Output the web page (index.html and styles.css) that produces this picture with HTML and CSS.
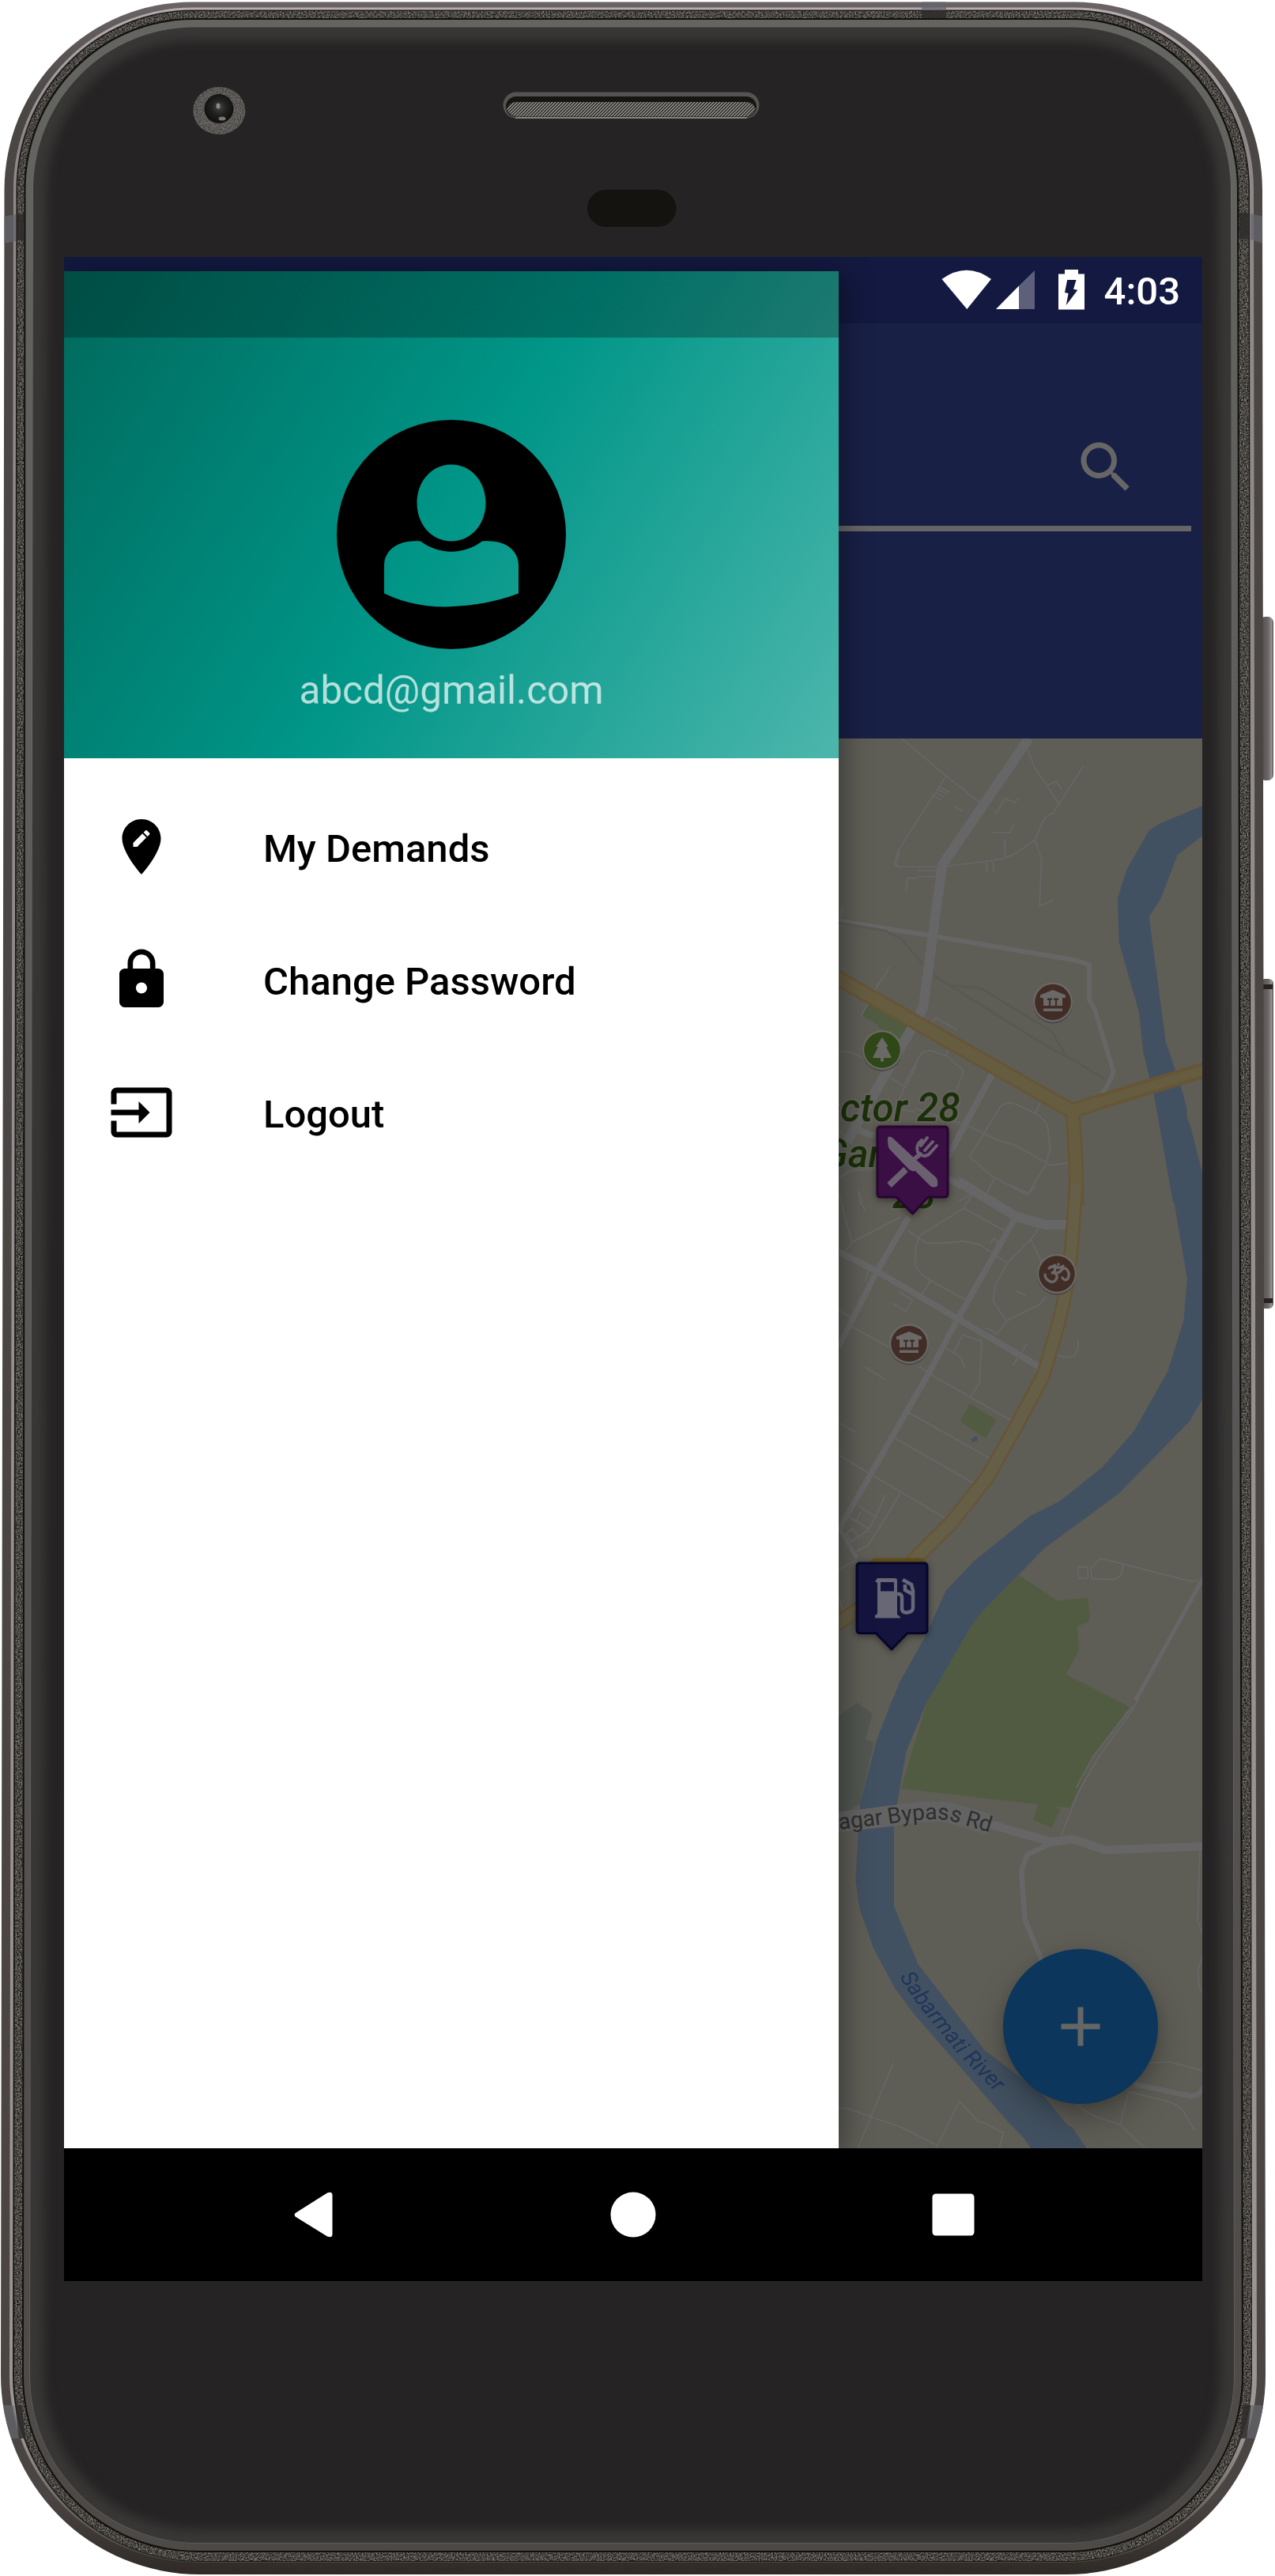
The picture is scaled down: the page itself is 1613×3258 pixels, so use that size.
FILE: index.html
```html
<!DOCTYPE html>
<html lang="en">
<head>
<meta charset="utf-8">
<title>Navigation drawer</title>
<link rel="stylesheet" href="styles.css">
</head>
<body>
<main class="phone">
  <svg class="phone-body" viewBox="0 0 1613 3258" aria-hidden="true">
    <defs>
      <filter id="grain" x="0" y="0" width="100%" height="100%" color-interpolation-filters="sRGB">
        <feTurbulence type="fractalNoise" baseFrequency=".55" numOctaves="2" seed="4" result="n"/>
        <feColorMatrix in="n" type="matrix" values=".8 0 0 0 -.11  .8 0 0 0 -.12  .8 0 0 0 -.14  0 0 0 0 1" result="g"/>
        <feComposite in="g" in2="SourceGraphic" operator="in"/>
      </filter>
      <filter id="soft" x="-5%" y="-5%" width="110%" height="110%" color-interpolation-filters="sRGB"><feGaussianBlur stdDeviation="7"/></filter>
      <linearGradient id="rim" x1="0" y1="0" x2="0" y2="1">
        <stop offset="0" stop-color="#6b6365"/><stop offset=".04" stop-color="#4a4643"/><stop offset=".97" stop-color="#4a4542"/><stop offset="1" stop-color="#2f2a26"/>
      </linearGradient>
      <linearGradient id="shine" x1="0" y1="0" x2="0" y2="1">
        <stop offset="0" stop-color="#b5aeb0"/><stop offset=".05" stop-color="#8f888a"/><stop offset=".95" stop-color="#9b9593"/><stop offset="1" stop-color="#4c4541"/>
      </linearGradient>
      <linearGradient id="lip" x1="0" y1="0" x2="0" y2="1">
        <stop offset="0" stop-color="#646460"/><stop offset=".5" stop-color="#5a5858"/><stop offset="1" stop-color="#4c4946"/>
      </linearGradient>
      <linearGradient id="key" x1="0" y1="0" x2="1" y2="0">
        <stop offset="0" stop-color="#4b4745"/><stop offset=".65" stop-color="#6f6a69"/><stop offset=".85" stop-color="#999395"/><stop offset="1" stop-color="#55504e"/>
      </linearGradient>
      <pattern id="mesh" width="4" height="4" patternUnits="userSpaceOnUse">
        <rect width="4" height="4" fill="#24231f"/><path d="M-1 5L5 -1M-1 1L1 -1M3 5L5 3" stroke="#a09e9a" stroke-width="1.300"/>
      </pattern>
      <radialGradient id="lens" cx=".5" cy=".45" r=".5">
        <stop offset="0" stop-color="#454644"/><stop offset=".5" stop-color="#222321"/><stop offset="1" stop-color="#111110"/>
      </radialGradient>
      <clipPath id="glass"><path d="M42 240A203 206 0 0 1 245 34.500H1355A203 206 0 0 1 1557 240L1561 3004A212 212 0 0 1 1349 3216H250A212 212 0 0 1 38 3004Z"/></clipPath>
      <clipPath id="shell"><path d="M5.500 240A238 238 0 0 1 243.500 2.500H1359A238 238 0 0 1 1597 240L1601 3004A252 252 0 0 1 1349 3256H253A252 252 0 0 1 1 3004Z"/></clipPath>
    </defs>
    <rect x="1594" y="780" width="17" height="207" rx="7" fill="url(#key)"/>
    <rect x="1594" y="1238" width="17" height="417" rx="6" fill="url(#key)"/>
    <path d="M1598 1248h12M1598 1645h12" stroke="#262220" stroke-width="6"/>
    <path fill="url(#rim)" d="M5.500 240A238 238 0 0 1 243.500 2.500H1359A238 238 0 0 1 1597 240L1601 3004A252 252 0 0 1 1349 3256H253A252 252 0 0 1 1 3004Z"/>
    <path fill="url(#shine)" d="M17 240A227 230 0 0 1 244 9.500H1358A227 230 0 0 1 1586 240L1590 3004A241 237 0 0 1 1349 3241H253A240 237 0 0 1 12 3004Z"/>
    <path fill="#1c1917" d="M20.500 240A223 227 0 0 1 244 12.500H1358A223 227 0 0 1 1581 240L1584 3004A235 236 0 0 1 1349 3240H253A237 236 0 0 1 16 3004Z"/>
    <path filter="url(#grain)" d="M22 240A222 226 0 0 1 244 14H1358A222 226 0 0 1 1579.500 240L1583 3004A234 235 0 0 1 1349 3239H253A235 235 0 0 1 18 3004Z"/>
    <path fill="#12100e" d="M30.500 240A213 216 0 0 1 244 23H1356A210 216 0 0 1 1567 240L1573 3004A224 224 0 0 1 1349 3228H250A221 224 0 0 1 28 3004Z"/>
    <path fill="url(#lip)" d="M32.500 240A212 215 0 0 1 244 25H1356A209 215 0 0 1 1565 240L1571 3004A222 222 0 0 1 1349 3226H250A220 222 0 0 1 30 3004Z"/>
    <path fill="#252323" stroke="#757472" stroke-width="1.500" stroke-opacity=".6" d="M42 240A203 206 0 0 1 245 34.500H1355A203 206 0 0 1 1557 240L1561 3004A212 212 0 0 1 1349 3216H250A212 212 0 0 1 38 3004Z"/>
    <g clip-path="url(#glass)">
      <path fill="none" stroke="#383736" stroke-width="34" filter="url(#soft)" d="M42 240A203 206 0 0 1 245 34.500H1355A203 206 0 0 1 1557 240L1561 3004A212 212 0 0 1 1349 3216H250A212 212 0 0 1 38 3004Z"/>
    </g>
    <g clip-path="url(#shell)">
      <path fill="#64666c" fill-opacity=".75" d="M4 274l16-3v34l-16 3zM1582 270l16 4v34l-16-5zM1166 2h31v10h-31zM1 3042h16l8 42H8zM1584 3042h18v42h-26z"/>
      <path fill="#2e2c2c" fill-opacity=".85" d="M22 271h8.500v33H22zM1567.500 269h12v33h-12zM1166 13h31v10h-31zM19 3042h8.500l5 42h-8.500zM1573 3042h10l-6 42h-9z"/>
    </g>
    <ellipse cx="277.300" cy="140" rx="33" ry="30" filter="url(#grain)"/>
    <ellipse cx="277.300" cy="140" rx="33" ry="30" fill="#6a6767" fill-opacity=".5"/>
    <circle cx="277" cy="137.500" r="18.500" fill="url(#lens)"/>
    <ellipse cx="276" cy="134" rx="2.500" ry="3.500" fill="#8b8b8a"/><ellipse cx="281" cy="150" rx="4.500" ry="2.500" fill="#77786f"/>
    <rect x="636.500" y="116.500" width="324" height="33" rx="16.500" fill="#565453"/>
    <rect x="640" y="122" width="317" height="26" rx="13" fill="#16150f"/>
    <path fill="url(#mesh)" d="M641 138Q644 129 654 129H943Q953 129 956 138Q952 147.500 943 147.500H654Q645 147.500 641 138Z"/>
    <path d="M652 149H945" stroke="#98969a" stroke-width="1.500"/>
    <rect x="743" y="240" width="112.500" height="47" rx="23.500" fill="#141310"/>
  </svg>

  <div class="screen">
    <header class="status-bar">
      <svg class="status-icons" viewBox="1190 325 182 84" fill="#fff" aria-hidden="true">
        <path d="M1190.500 353Q1222 330.500 1253 353L1222.300 391Z"/>
        <path d="M1308 342V391H1288V361.500Z" fill="#5d5f7b"/><path d="M1288 361.500V391H1259Z"/>
        <path fill-rule="evenodd" d="M1346 341h17v5.500h8V391.500h-33V346.500h8zM1349.200 354L1346 370 1350.600 371 1347.800 386 1362.300 366.700 1357 365.700 1360.500 354Z"/>
      </svg>
      <span class="clock">4:03</span>
    </header>
    <section class="toolbar">
      <div class="search-field">
        <svg class="icon" viewBox="0 0 24 24" fill="#666"><path d="M15.500 14h-.79l-.28-.27C15.410 12.590 16 11.110 16 9.500 16 5.910 13.090 3 9.500 3S3 5.910 3 9.500 5.910 16 9.500 16c1.610 0 3.090-.59 4.230-1.570l.27.28v.79l5 4.990L20.490 19l-4.990-5zm-6 0C7.010 14 5 11.990 5 9.500S7.010 5 9.500 5 14 7.010 14 9.500 11.990 14 9.500 14z"/></svg>
      </div>
    </section>
    <section class="map-area">
      <svg class="map" viewBox="0 0 460 1783">
        <defs>
          <path id="bypass" d="M-60 1387L0 1380L71 1371.500Q115 1365 140 1368L160 1374.500L191 1383.500"/>
          <path id="riverline" d="M77 1566Q92 1592 107 1610L150 1663L215 1729"/>
          <g id="museum">
            <circle cy="2" r="25" fill="#4b4a46"/><circle r="25" fill="#6b6968"/><circle r="22.800" fill="#412d25"/>
            <path fill="#6b6968" d="M0-15.500L16-9V-5.500H12V4.500H-12V-5.500H-16V-9ZM-12 8H12V11.500H-12Z"/>
            <path fill="#412d25" d="M-7-5H-1V-2.500H-3V4.500H-5V-2.500H-7ZM1-5H7V-2.500H5V4.500H3V-2.500H1Z"/>
          </g>
        </defs>
        <rect width="460" height="1783" fill="#5e5d56"/>

        <!-- north: 0 to 566 -->
        <g transform="translate(-21 -14) scale(.36543 .38265)" fill="none" stroke-linejoin="round">
          <path fill="#425161" d="M1320 258L1168 318 1131 342 1055 470 1023 565 1028 710 1097 940 1112 1075 1148 1210 1215 1568 1320 1572V1486L1276 1320 1264 1290 1262 1255 1240 1180 1190 1040 1132 625 1172 567 1230 422 1320 355Z"/>
          <path fill="#515b41" d="M163 908L300 985 270 1030 200 995 195 985 138 952Z"/>
          <g stroke="#666" stroke-width="5">
            <path d="M275 36L430 160 550 252M430 160L385 225 265 405 250 450 262 461H400M268 410L258 455M385 225L415 242M395 215L425 232M400 205L435 222M408 197L445 215M458 260L485 276M712 75L735 132 820 252 905 128M782 190L812 178 830 205M820 252L800 285Q780 285 765 310L737 372 672 415Q630 435 590 440L400 463M737 372L760 435 753 590 802 570M598 288L635 235 665 248 678 236M590 348H650L662 320M633 368V428M570 445V478M590 445L595 478M330 473H400M392 493H330L325 500 295 498 291 542M70 592L65 630M232 790L215 825 190 855 135 955M57 1070Q110 1070 145 1095M380 975L392 960 468 1000M440 1060L430 1085M285 1180L345 1075 375 1068 430 1085 490 1135 465 1200M225 1150L290 1190 325 1120M325 1260L500 1315 610 1365 665 1380 780 1440 M755 1240L738 1275 M510 1420L620 1250Q640 1238 665 1243L738 1275Q778 1300 780 1320L790 1390 775 1445 710 1545 590 1484 510 1420M780 1447L855 1440M600 1485L565 1548M57 1490L100 1465 200 1460M125 1530L140 1568M470 1568L520 1540M57 1330L110 1380M285 1190L255 1260 320 1270"/>
            <path stroke-width="16" d="M57 640L375 688 880 770 925 785V900L945 935 1008 1135Q1008 1155 955 1235"/>
            <path stroke-width="34" d="M716 36L416 455 350 925 325 975 M316 985L85 1370"/>
            <path stroke-width="22" d="M592 1140L435 1420M430 1490L600 1568M120 1330L180 1350"/>
          </g>
          <g stroke="#595855" stroke-width="7"><path d="M57 645L220 672 275 700 350 785M385 818L440 852 550 862 795 1005 840 1078M440 852L790 1060 880 1105 978 1162"/></g>
          <g stroke="#665536" stroke-width="52"><path d="M50 826L865 1268L960 1238L1325 1132M865 1260Q882 1400 880 1580"/></g>
          <g stroke="#665d41" stroke-width="38"><path d="M50 826L865 1268L960 1238M865 1260Q882 1400 880 1580"/><path d="M950 1241L1325 1132" stroke-width="30"/></g>
        </g>

        <!-- centre: 566 to 1216 -->
        <g transform="translate(-21 566) scale(.36543 .41454)" fill="none" stroke-linejoin="round">
          <path fill="#425161" d="M1320-5H1208L1264 282 1252 410 1197 565 1080 748 970 858 823 962 722 1006 525 1145 428 1235 360 1370 268 1515 243 1570H367L512 1350Q540 1310 570 1285L680 1186 770 1105 1025 940 1272 718 1320 645Z"/>
          <path fill="#515b41" d="M512 665L603 712 566 770 477 718ZM680 1186L815 1265 918 1257 928 1310 922 1330 883 1343 890 1415 845 1490 1020 1570H367L512 1350Q540 1310 570 1285Z"/>
          <path fill="#425161" d="M517 774L527 765 540 766 535 778 520 781Z"/>
          <g stroke="#666" stroke-width="5">
            <path d="M57 20L103 172 270 95M103 172L85 195M125 20L135 55 150 73M520 25L490 68 340 150 325 180 322 235Q325 262 375 288L503 350M490 68L635 138M740 0L715 22 645-5M295 135L360 173Q400 178 490 168L548 180 640 235 722 162 740 145 748 125M722 162L760 232M640 238L600 300 592 350 638 412 752 362 775 338M638 412L602 455M582 175L595 160 610 172 600 187M375 288L345 332M160 255L150 290M245 358L290 382 313 348 265 322M668 318L705 334M57 380L103 402M100 428L240 495 M335 550L370 572 660 718M565 432L605 450M710 480L660 548M420 490L480 522 495 555M455 510L487 453 553 475M553 465L545 598Q530 625 515 640M148 552L218 590M297 690L590 835M245 765L530 910M57 722L118 752M57 820L170 880 440 1020M220 940L185 1010 125 975M270 938L200 1040 160 1095 120 1115M185 1010L160 1050 100 1085 85 1060 105 1045 125 1070M115 1025L135 995M98 1012L160 1045M57 1170L120 1140M57 1255L75 1300M887 468Q890 500 870 520Q860 528 812 515M887 1163H920V1197H887ZM930 1165L963 1137 1042 1153Q1040 1195 1010 1200L935 1198ZM1042 1153L1270 1205 1300 1205"/>
            <path stroke-width="20" d="M300 95L190 260 57 490M670 95L470 405 370 570 57 1050M57 200L200 265 470 405 755 553"/>
            <path stroke-width="30" d="M470-15L670 92 770 118H860"/>
            <path stroke-width="14" d="M660 110L500 350M1320 1195L1085 1570M57 1040L120 1135"/>
          </g>
          <g stroke="#665536" stroke-width="50"><path d="M880-10L865 170Q850 340 795 490L765 580 680 720 575 885 450 1025 330 1130 240 1230 50 1335"/></g>
          <g stroke="#665f47" stroke-width="37"><path d="M880-10L865 170Q850 340 795 490L765 580 680 720 575 885 450 1025 330 1130 240 1230 50 1335"/></g>
          <path fill="#66511b" d="M165 1150Q170 1135 190 1135H340Q358 1138 360 1152Z"/>
        </g>

        <!-- south: 1216 to 1783 -->
        <g transform="translate(-21 1216) scale(.36543 .38265)" fill="none" stroke-linejoin="round">
          <path fill="#525650" d="M50 60L120 10 175 45 150 130 180 140 130 345 50 385Z"/>
          <path fill="#515b41" d="M367-5H1010L1063 25 940 185 858 356 808 352 825 362 795 422 730 396 748 345 274 293Z"/>
          <path fill="#425161" d="M245-5L190 130 132 340 116 595 130 690 178 820 250 950 320 1040 640 1390 700 1450 725 1485H918L865 1412 848 1405 760 1300 565 1160 332 873 249 682V400L292 168 368-5Z"/>
          <g stroke="#666" stroke-width="5">
            <path d="M1097-5L1070 40 960 185 890 300 825 455M1075 20L940 185 880 290M248 1197L122 1485M57 1350H90L170 1378 275 1413 400 1473 475 1326 537 1390 570 1402 628 1432 612 1485M400 1473L395 1485M1308 500L1300 730 1318 775M1318 850L1300 895 1305 945 1320 975M1120 1200L1200 1196 1320 1226M1060 1295L1190 1325Q1240 1340 1250 1360L1290 1422M1060 1300L1032 1403M880 1335Q920 1375 1032 1403L1120 1485"/>
            <path stroke-width="18" d="M790 475L710 512 690 565 702 725 760 860M1080 1270L1280 1310Q1310 1305 1320 1280"/>
            <path stroke-width="28" d="M560 405L795 470 868 460 980 496 1320 484"/>
          </g>
        </g>
        <path fill="none" stroke="#636363" stroke-width="26" stroke-linejoin="round" d="M-10 1372L71 1362Q115 1355 142 1359L192 1374"/>

        <g class="park-label">
          <text x="153.500" y="483.500" text-anchor="end">Sector 28</text>
          <text x="-21" y="541.500">Garden</text>
          <text x="68" y="594">28</text>
        </g>
        <text class="road-label" text-anchor="end"><textPath href="#bypass" startOffset="100%">nagar Bypass Rd</textPath></text>
        <text class="river-label"><textPath href="#riverline">Sabarmati River</textPath></text>

        <use href="#museum" x="271" y="333.500"/>
        <use href="#museum" x="89" y="765.500"/>
        <g transform="translate(55 394)">
          <circle cy="2" r="25" fill="#4b4a46"/><circle r="25" fill="#6b6968"/><circle r="22.800" fill="#304817"/>
          <path fill="#6b6968" d="M0-16L8-4H5L12 10H2V14.500H-2V10H-12L-5-4H-8Z"/>
        </g>
        <g transform="translate(276 677)">
          <circle cy="2" r="25" fill="#4b4a46"/><circle r="25" fill="#6b6968"/><circle r="22.800" fill="#412d25"/>
          <g fill="none" stroke="#6b6968" stroke-width="3.300" stroke-linecap="round">
            <path d="M-10-7Q-4-12-2-6Q-2-2-7-1Q1-2 0 5Q-3 13-10 9Q-15 6-15 1M-2-1Q4-1 6-5Q10-9 13-5Q17 0 14 6Q10 10 7 5M-3-11Q2-5 8-10"/>
          </g><circle cx="2" cy="-12" r="1.800" fill="#6b6968"/>
        </g>

        <g class="pin">
          <path fill="#3a0f44" stroke="#290531" stroke-width="3" stroke-linejoin="round" d="M53 491H134Q138 491 138 495V576Q138 580 134 580H113L93.500 601 73 580H53Q49 580 49 576V495Q49 491 53 491Z"/>
          <path fill="#6b6070" d="M62 505Q64 502 68 505L97 532 123 555Q126 558 125 566Q120 569 116 566L97 547Q91 548 87 543L64 519Q62 516 62 505Z"/>
          <g stroke="#6b6070" stroke-linecap="round" fill="none">
            <path stroke-width="8" stroke-linecap="butt" d="M64 565L85 545"/>
            <path stroke-width="4" d="M105 508Q97 515 100 523Q107 531 114 526L124 515M112 505L104 515M119 510L109 521"/>
            <path stroke-width="6" d="M103 526L98 530"/>
          </g>
        </g>
        <g class="pin">
          <path fill="#14143f" stroke="#06062b" stroke-width="3" stroke-linejoin="round" d="M27 1043H108Q112 1043 112 1047V1127Q112 1131.500 108 1131.500H87L67 1152 47 1131.500H27Q23 1131.500 23 1127V1047Q23 1043 27 1043Z"/>
          <path fill="#676776" fill-rule="evenodd" d="M49 1062H71Q74 1062 74 1065V1108L78 1111V1112.500H46V1109L49 1107V1068L46 1066ZM53 1067V1078.500H70V1067Z"/>
          <path fill="none" stroke="#676776" stroke-width="4.500" d="M74 1082H77Q80 1083 80 1087V1102Q82 1107 89 1105Q94 1104 94 1099V1078L92 1070 81 1064M84 1070V1077L93 1082"/>
        </g>
      </svg>
      <button class="fab" aria-label="Add"><svg viewBox="0 0 24 24" fill="#666"><path d="M19 13h-6v6h-2v-6H5v-2h6V5h2v6h6v2z"/></svg></button>
    </section>
    <nav class="system-nav">
      <span><svg viewBox="0 0 64 64"><path d="M12 28.500L50 4.500Q56 2 56.500 7V57Q56 62 50 59.500L12 36Q5 32 12 28.500Z"/></svg></span>
      <span><svg viewBox="0 0 64 64"><circle cx="32" cy="32" r="28.500"/></svg></span>
      <span><svg viewBox="0 0 64 64"><rect x="5.500" y="5.500" width="53" height="53" rx="4.500"/></svg></span>
    </nav>

    <aside class="drawer">
      <div class="drawer-header">
        <svg class="avatar" viewBox="0 0 290 290">
          <path fill-rule="evenodd" d="M145 0A145 145 0 1 1 145 290A145 145 0 1 1 145 0ZM145 56.500C120 56.500 101.500 78 101.500 105S120 153.500 145 153.500 188.500 132 188.500 105 170 56.500 145 56.500ZM106 153.500C77 151 60 165 60 184V219.500Q95 236.500 138 236.500Q190 235 230 219.500V184C230 165 213 151 184 153.500C161 171 129 171 106 153.500Z"/>
        </svg>
        <span class="email">abcd@gmail.com</span>
      </div>
      <ul class="menu">
        <li><svg class="icon" viewBox="0 0 24 24"><path d="M12 2C8.140 2 5 5.140 5 9c0 5.250 7 13 7 13s7-7.750 7-13c0-3.860-3.140-7-7-7zm-1.560 10H9v-1.440l3.350-3.340 1.430 1.430L10.440 12zm4.450-4.450l-.7.7-1.440-1.440.7-.7c.15-.15.39-.15.54 0l.9.9c.15.15.15.39 0 .54z"/></svg><span>My Demands</span></li>
        <li><svg class="icon" viewBox="0 0 24 24"><path d="M18 8h-1V6c0-2.760-2.240-5-5-5S7 3.240 7 6v2H6c-1.100 0-2 .9-2 2v10c0 1.100.9 2 2 2h12c1.100 0 2-.9 2-2V10c0-1.100-.9-2-2-2zm-6 9c-1.100 0-2-.9-2-2s.9-2 2-2 2 .9 2 2-.9 2-2 2zm3.100-9H8.900V6c0-1.710 1.390-3.100 3.100-3.100 1.710 0 3.100 1.390 3.100 3.100v2z"/></svg><span>Change Password</span></li>
        <li><svg class="icon" viewBox="0 0 24 24"><path d="M21 3.010H3c-1.100 0-2 .9-2 2V9h2V4.990h18v14.030H3V15H1v4.010c0 1.100.9 1.980 2 1.980h18c1.100 0 2-.88 2-1.980v-14c0-1.110-.9-2-2-2zM11 16l4-4-4-4v3H1v2h10v3z"/></svg><span>Logout</span></li>
      </ul>
    </aside>
  </div>
</main>
</body>
</html>
```
FILE: styles.css
```css
* { box-sizing: border-box; }

body {
  margin: 0;
  background: #fff;
  font-family: Roboto, sans-serif;
}

svg { display: block; }

.phone {
  display: grid;
  width: 1613px;
  height: 3258px;
}

.phone-body,
.screen { grid-area: 1 / 1; }

.phone-body {
  width: 1613px;
  height: 3258px;
}

.screen {
  position: relative;
  display: flex;
  flex-direction: column;
  width: 1440px;
  height: 2560px;
  margin: 325px 0 0 81px;
  overflow: hidden;
}

.status-bar {
  display: flex;
  justify-content: flex-end;
  align-items: center;
  height: 84px;
  padding-right: 28px;
  background: #131940;
}

.status-icons {
  width: 182px;
  height: 84px;
}

.clock {
  margin-left: 24px;
  padding-top: 4px;
  color: #fff;
  font-size: 49px;
  font-weight: 500;
  line-height: 80px;
}

.toolbar {
  height: 525px;
  padding: 98px 14px 0;
  background: #192046;
}

.search-field {
  display: flex;
  justify-content: flex-end;
  height: 165px;
  padding: 42px 66px 0;
  border-bottom: 7px solid #666;
}

.icon {
  flex: none;
  width: 84px;
  height: 84px;
}

.map-area {
  position: relative;
  height: 1783px;
  padding-left: 980px;
}

.map {
  width: 460px;
  height: 1783px;
}

.park-label {
  fill: #1b3008;
  stroke: #656461;
  stroke-width: 4px;
  paint-order: stroke;
  font-size: 49.5px;
  font-style: italic;
  font-weight: 500;
}

.road-label {
  fill: #2e2e2e;
  font-size: 28px;
}

.river-label {
  fill: #20365a;
  font-size: 28px;
  font-style: italic;
}

.pin { filter: drop-shadow(0 2px 5px rgba(0, 0, 0, .45)); }

.fab {
  position: absolute;
  right: 56px;
  bottom: 56px;
  display: grid;
  place-items: center;
  width: 196px;
  height: 196px;
  padding: 0;
  border: 0;
  border-radius: 50%;
  background: #0c365b;
  box-shadow: 0 20px 42px rgba(0, 0, 0, .27), 0 4px 14px rgba(0, 0, 0, .12);
}

.fab svg {
  width: 84px;
  height: 84px;
}

.system-nav {
  display: flex;
  justify-content: center;
  height: 168px;
  background: #000;
}

.system-nav span {
  display: grid;
  place-items: center;
  width: 405px;
}

.system-nav svg {
  width: 64px;
  height: 64px;
  fill: #fff;
}

.drawer {
  position: absolute;
  top: 18px;
  bottom: 168px;
  left: 0;
  width: 980px;
  background: #fff;
  box-shadow: 4px 6px 36px rgba(0, 0, 0, .42);
  clip-path: inset(-18px -60px 0 0);
}

.drawer-header {
  display: flex;
  flex-direction: column;
  align-items: center;
  height: 616px;
  padding-top: 188px;
  background:
    linear-gradient(rgba(0, 0, 0, .267) 84px, transparent 84px),
    linear-gradient(122.15deg, #00695c, #009688 50%, #4db6ac);
}

.avatar {
  width: 290px;
  height: 290px;
}

.email {
  margin-top: 22px;
  color: rgba(255, 255, 255, .7);
  font-size: 49.4px;
  line-height: 60px;
}

.menu {
  margin: 0;
  padding: 28px 0;
  list-style: none;
}

.menu li {
  display: flex;
  align-items: center;
  gap: 112px;
  height: 168px;
  padding: 0 56px;
  color: #000;
  font-size: 49px;
  font-weight: 500;
}

.menu span { padding-top: 4px; }
```
